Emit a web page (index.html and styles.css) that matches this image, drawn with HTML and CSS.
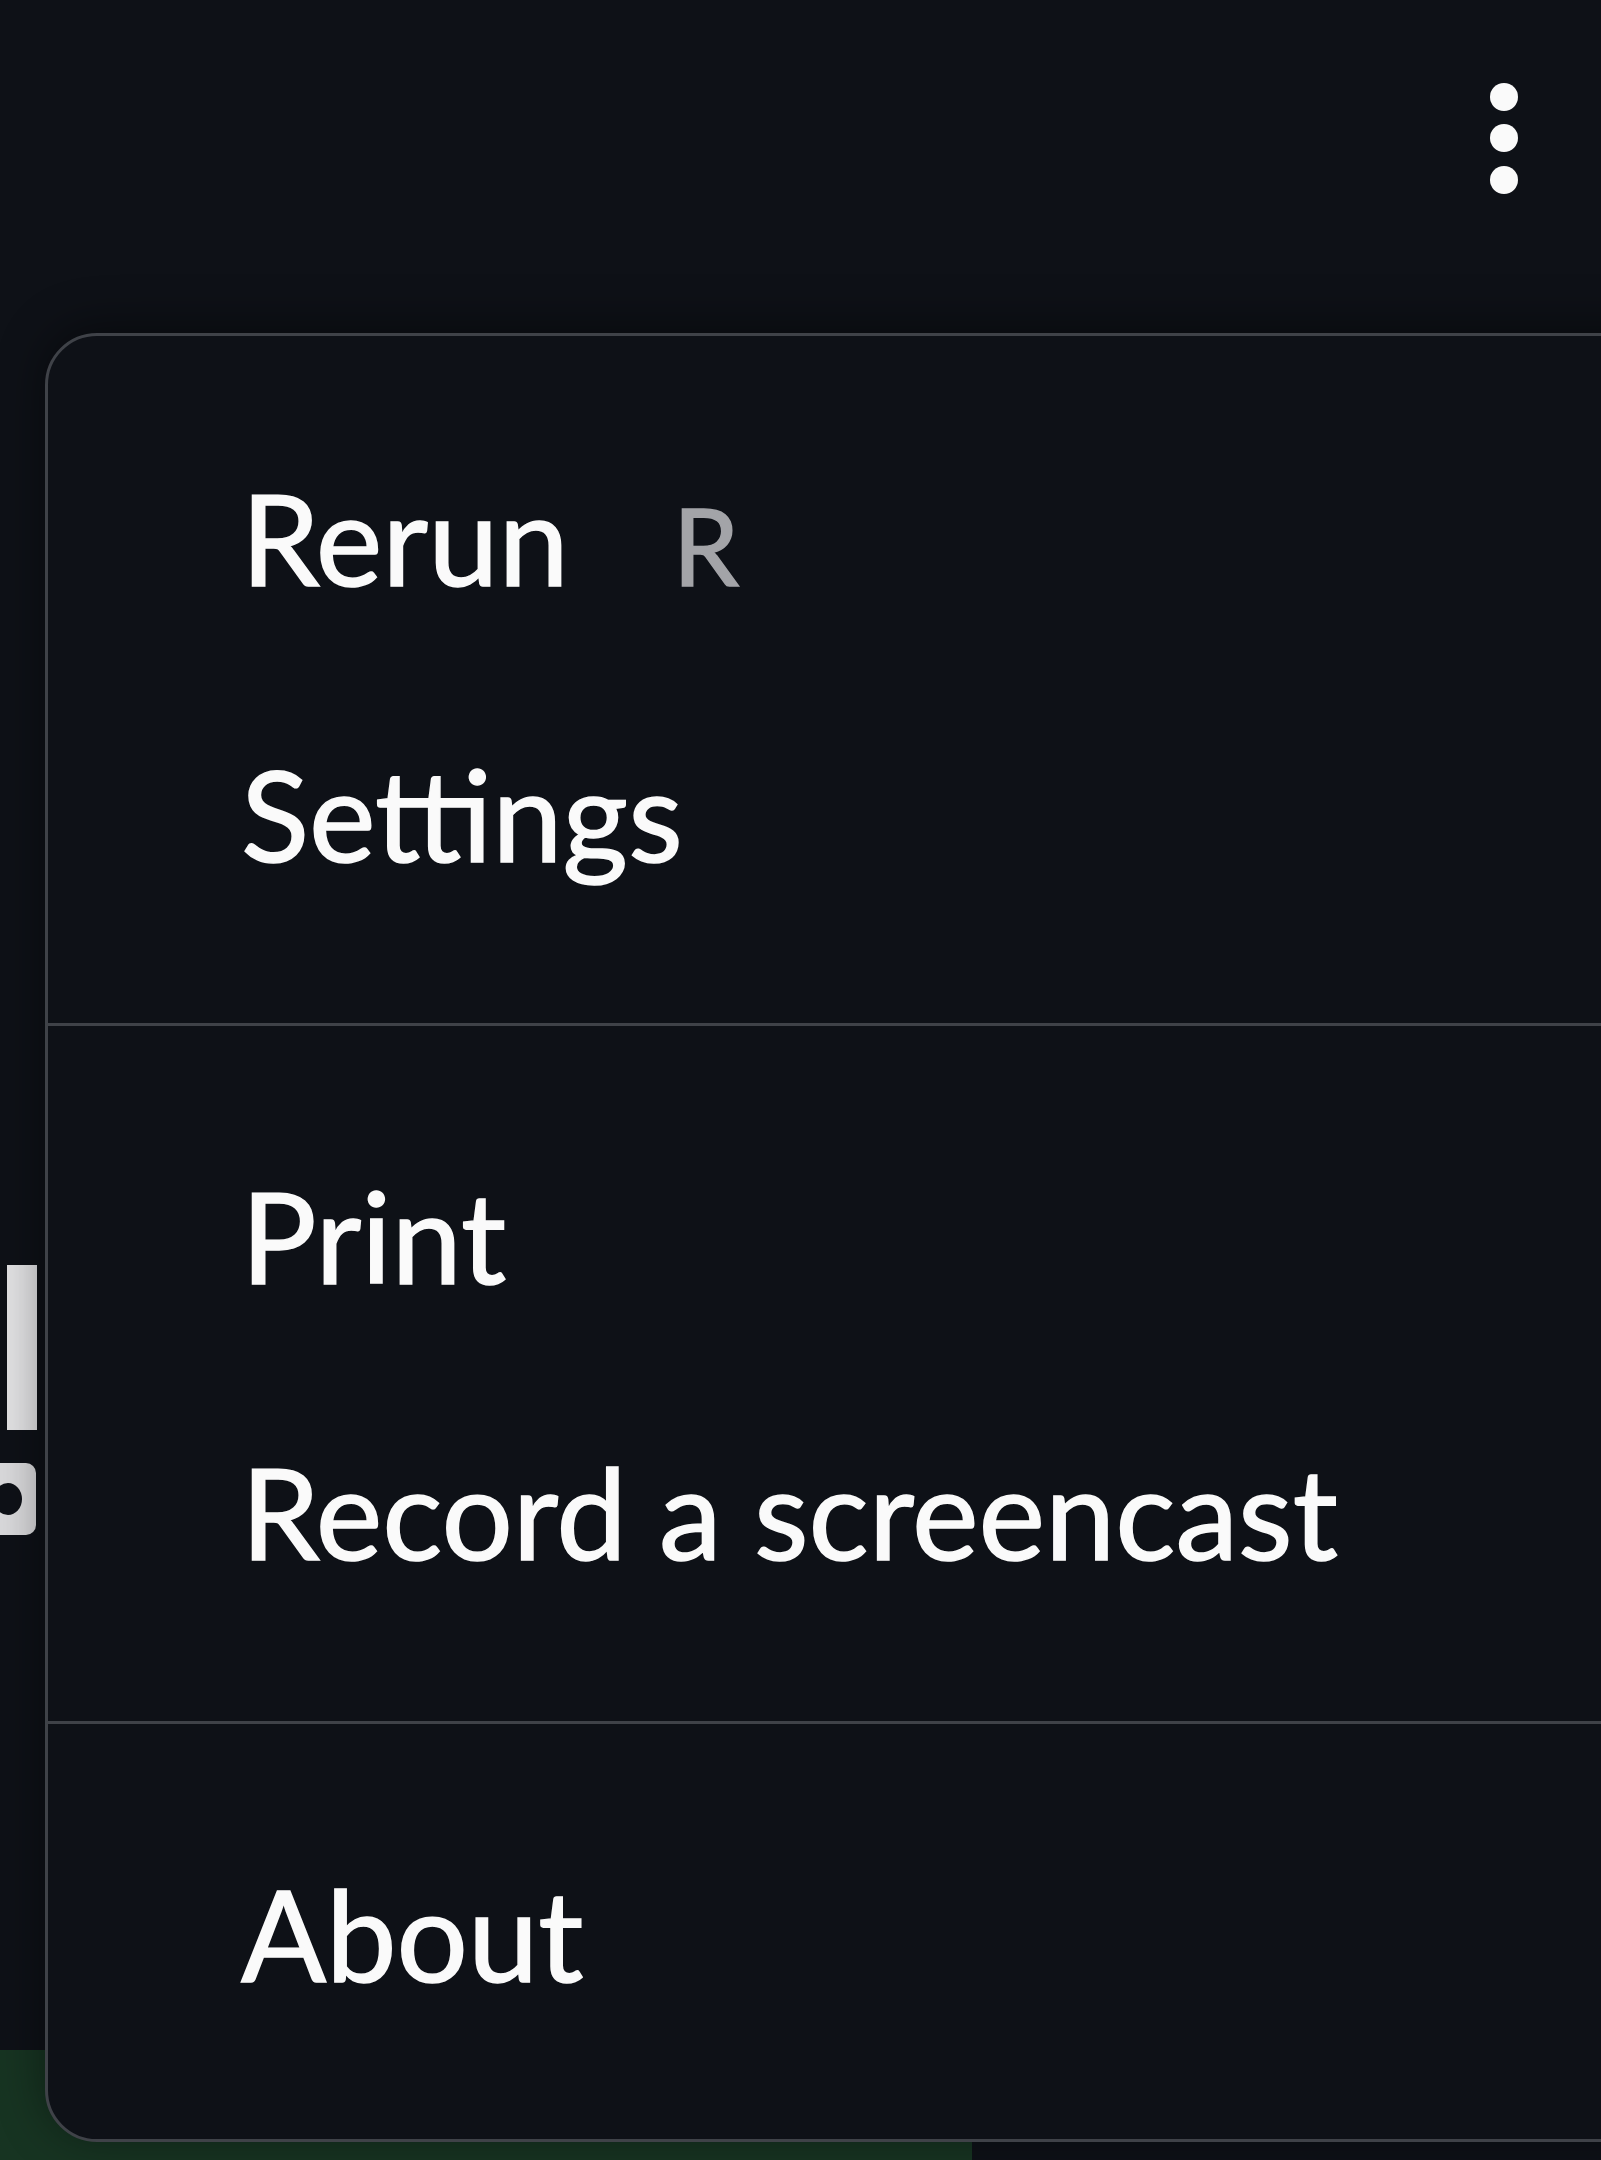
FILE: index.html
```html
<!DOCTYPE html>
<html lang="en">
<head>
<meta charset="utf-8">
<title>Main menu</title>
<link rel="stylesheet" href="styles.css">
</head>
<body>
<div class="page">
  <header class="toolbar">
    <div class="kebab" role="button" aria-label="Main menu">
      <svg width="30" height="114" viewBox="0 0 30 114">
        <circle cx="15" cy="14" r="14" fill="#fafafa"/>
        <circle cx="15" cy="55" r="14" fill="#fafafa"/>
        <circle cx="15" cy="97" r="14" fill="#fafafa"/>
      </svg>
    </div>
  </header>
  <main class="content">
    <div class="side">
      <div class="bar"></div>
      <div class="glyph"><span class="hole"></span></div>
    </div>
    <div class="footer-strip"><div class="green"></div></div>
  </main>

  <nav class="menu">
    <ul class="group">
      <li class="item"><span class="label">Rerun</span><span class="shortcut">R</span></li>
      <li class="item"><span class="label">Settings</span></li>
    </ul>
    <div class="sep"></div>
    <ul class="group">
      <li class="item"><span class="label">Print</span></li>
      <li class="item"><span class="label">Record a screencast</span></li>
    </ul>
    <div class="sep"></div>
    <ul class="group">
      <li class="item"><span class="label">About</span></li>
    </ul>
  </nav>
</div>
</body>
</html>
```
FILE: styles.css
```css
html, body {
  margin: 0;
  padding: 0;
  background: #0e1117;
}
body {
  width: 1601px;
  height: 2160px;
  overflow: hidden;
  font-family: "Lato", "Noto Sans", sans-serif;
  color: #fafafa;
}
.page {
  position: relative;
  width: 1601px;
  height: 2160px;
  display: flex;
  flex-direction: column;
}
.toolbar {
  height: 333px;
  display: flex;
  justify-content: flex-end;
  align-items: flex-start;
  padding-right: 82px;
  box-sizing: border-box;
}
.kebab {
  margin-top: 83px;
  width: 30px;
  height: 114px;
}
.kebab svg { display: block; }

.content {
  flex: 1;
  display: flex;
  flex-direction: column;
}
.side {
  width: 40px;
  padding-top: 932px;
  display: flex;
  flex-direction: column;
}
.bar {
  margin-left: 7px;
  width: 30px;
  height: 165px;
  background: #e2e2e4;
}
.glyph {
  margin-top: 33px;
  width: 36px;
  height: 72px;
  background: #d9d9db;
  border-radius: 0 10px 10px 0;
  position: relative;
}
.hole {
  position: absolute;
  left: -6px;
  top: 20px;
  width: 28px;
  height: 32px;
  border-radius: 50%;
  background: #0e1117;
}
.footer-strip {
  margin-top: auto;
  height: 110px;
  display: flex;
}
.green {
  width: 972px;
  background: #173422;
}

.menu {
  position: absolute;
  left: 45px;
  top: 333px;
  width: 1700px;
  height: 1809px;
  box-sizing: border-box;
  border: 3px solid #3f4248;
  border-radius: 52px;
  background: #0e1117;
  box-shadow: 0 -6px 48px rgba(0, 0, 0, 0.45);
  padding: 64px 0 70px;
}
.group {
  list-style: none;
  margin: 0;
  padding: 0;
}
.item {
  height: 276px;
  line-height: 276px;
  font-size: 126px;
  padding-left: 193px;
  white-space: nowrap;
  display: flex;
  align-items: baseline;
  -webkit-text-stroke: 1.5px #fafafa;
}
.shortcut {
  margin-left: 104px;
  font-size: 106px;
  color: #a3a4a8;
  -webkit-text-stroke: 1.5px #a3a4a8;
}
.sep {
  height: 3px;
  margin: 71px 0 72px;
  background: #3f4248;
}
```
